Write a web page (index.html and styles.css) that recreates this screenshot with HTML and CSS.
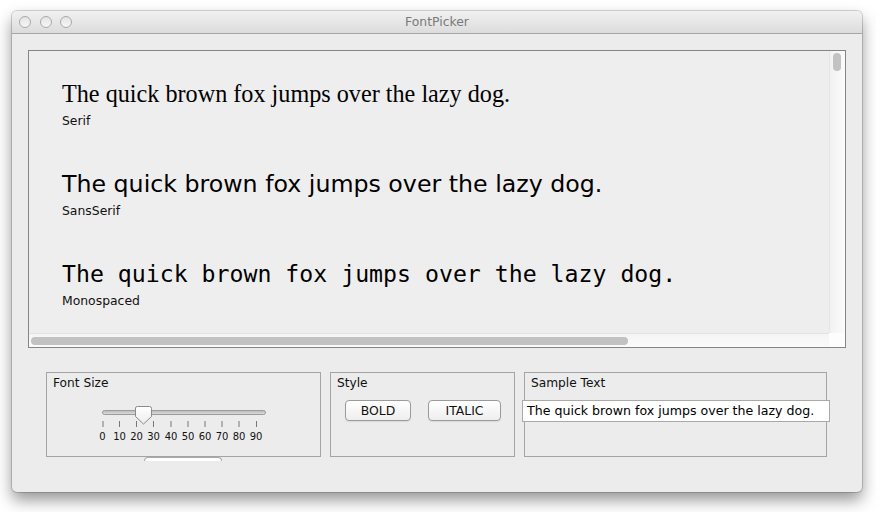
FILE: index.html
```html
<!DOCTYPE html>
<html>
<head>
<meta charset="utf-8">
<title>FontPicker</title>
<link rel="stylesheet" href="styles.css">
</head>
<body>
<div class="window">
  <div class="titlebar">
    <div class="lights">
      <span class="light"></span><span class="light"></span><span class="light"></span>
    </div>
    <div class="title">FontPicker</div>
    <div></div>
  </div>
  <div class="content">
    <div class="scrollpane">
      <div class="viewport">
        <div class="entry">
          <div class="sample serif">The quick brown fox jumps over the lazy dog.</div>
          <div class="fname">Serif</div>
        </div>
        <div class="entry">
          <div class="sample sans">The quick brown fox jumps over the lazy dog.</div>
          <div class="fname">SansSerif</div>
        </div>
        <div class="entry">
          <div class="sample mono">The quick brown fox jumps over the lazy dog.</div>
          <div class="fname">Monospaced</div>
        </div>
      </div>
      <div class="vbar"><div class="vthumb"></div></div>
      <div class="hbar"><div class="hthumb"></div></div>
      <div class="corner"></div>
    </div>
    <div class="panels">
      <div class="col">
        <div class="panel size-panel">
          <div class="ptitle">Font Size</div>
          <svg class="slider" width="170" height="38" viewBox="0 0 170 38">
            <defs>
              <linearGradient id="trk" x1="0" y1="0" x2="0" y2="1">
                <stop offset="0" stop-color="#b9b9b9"/>
                <stop offset="1" stop-color="#dedede"/>
              </linearGradient>
              <linearGradient id="thb" x1="0" y1="0" x2="0" y2="1">
                <stop offset="0" stop-color="#ffffff"/>
                <stop offset="1" stop-color="#ececec"/>
              </linearGradient>
            </defs>
            <rect x="3.5" y="6.5" width="163" height="4" rx="2" fill="url(#trk)" stroke="#9c9c9c"/>
            <g stroke="#777" stroke-width="1">
              <line x1="4" y1="17" x2="4" y2="23"/>
              <line x1="20.5" y1="17" x2="20.5" y2="23"/>
              <line x1="37.5" y1="17" x2="37.5" y2="23"/>
              <line x1="54.5" y1="17" x2="54.5" y2="23"/>
              <line x1="72" y1="17" x2="72" y2="23"/>
              <line x1="89" y1="17" x2="89" y2="23"/>
              <line x1="106" y1="17" x2="106" y2="23"/>
              <line x1="123" y1="17" x2="123" y2="23"/>
              <line x1="140" y1="17" x2="140" y2="23"/>
              <line x1="157.5" y1="17" x2="157.5" y2="23"/>
            </g>
            <path d="M36.5 4 Q36.5 2.5 38.5 2.5 L50.5 2.5 Q52.5 2.5 52.5 4.5 L52.5 12.5 L44.5 20 L36.5 12.5 Z" fill="url(#thb)" stroke="#8a8a8a"/>
            <g class="ticklbl" text-anchor="middle">
              <text x="3.5" y="35.5">0</text>
              <text x="20.5" y="35.5">10</text>
              <text x="37.5" y="35.5">20</text>
              <text x="54.5" y="35.5">30</text>
              <text x="72" y="35.5">40</text>
              <text x="89" y="35.5">50</text>
              <text x="106" y="35.5">60</text>
              <text x="123" y="35.5">70</text>
              <text x="140" y="35.5">80</text>
              <text x="157" y="35.5">90</text>
            </g>
          </svg>
        </div>
        <div class="stub"></div>
      </div>
      <div class="panel style-panel">
        <div class="ptitle">Style</div>
        <div class="buttons">
          <button class="btn bold-btn">BOLD</button>
          <button class="btn italic-btn">ITALIC</button>
        </div>
      </div>
      <div class="panel text-panel">
        <div class="ptitle">Sample Text</div>
        <div class="field">The quick brown fox jumps over the lazy dog.</div>
      </div>
    </div>
  </div>
</div>
</body>
</html>
```
FILE: styles.css
```css
html, body {
  margin: 0;
  padding: 0;
  background: #ffffff;
}
body {
  font-family: "DejaVu Sans", "Liberation Sans", sans-serif;
  color: #111;
  min-height: 512px;
}
.window {
  margin: 11px 0 0 12px;
  width: 850px;
  height: 481px;
  background: #ececec;
  border-radius: 5px;
  overflow: hidden;
  box-shadow: 0 0 0 1px rgba(0,0,0,0.16), 0 8px 16px rgba(0,0,0,0.42);
}
.titlebar {
  height: 22px;
  border-bottom: 1px solid #a6a6a6;
  background: linear-gradient(#f1f1f1, #dcdcdc);
  display: grid;
  grid-template-columns: 1fr auto 1fr;
  align-items: center;
}
.lights {
  display: flex;
  gap: 8.5px;
  padding-left: 7px;
}
.light {
  width: 10px;
  height: 10px;
  border-radius: 50%;
  border: 1px solid #a9a9a9;
  background: linear-gradient(#e4e4e4, #f6f6f6);
}
.title {
  font-size: 12.4px;
  color: #7a7a7a;
  line-height: 22px;
}
.content {
  padding: 16px 16px 0 16px;
}
.scrollpane {
  height: 298px;
  box-sizing: border-box;
  border: 1px solid #858585;
  display: grid;
  grid-template-columns: 1fr 16px;
  grid-template-rows: 1fr 14px;
}
.viewport {
  background: #eeeeee;
  overflow: hidden;
  padding-left: 33px;
  white-space: nowrap;
}
.entry {
  height: 90px;
  padding-top: 28px;
  box-sizing: border-box;
}
.sample {
  line-height: 30px;
  color: #000;
}
.serif {
  font-family: "Liberation Serif", serif;
  font-size: 24.2px;
}
.sans {
  font-family: "DejaVu Sans", sans-serif;
  font-size: 23.7px;
}
.mono {
  font-family: "DejaVu Sans Mono", monospace;
  font-size: 23.2px;
}
.fname {
  font-size: 12.4px;
  line-height: 16px;
  margin-top: 4px;
  color: #111;
}
.vbar {
  background: linear-gradient(to right, #f2f2f2, #fbfbfb);
  border-left: 1px solid #e6e6e6;
  padding: 2px 0 0 3px;
}
.vthumb {
  width: 8px;
  height: 18px;
  border-radius: 4px;
  background: #c2c2c2;
}
.hbar {
  background: linear-gradient(#f4f4f4, #fbfbfb);
  border-top: 1px solid #e3e3e3;
  padding: 3px 0 0 2px;
}
.hthumb {
  width: 597px;
  height: 8px;
  border-radius: 4px;
  background: #c2c2c2;
}
.corner {
  background: #fdfdfd;
}
.panels {
  display: flex;
  gap: 9px;
  margin-top: 24px;
  padding-left: 18px;
}
.col {
  display: flex;
  flex-direction: column;
}
.panel {
  height: 85px;
  box-sizing: border-box;
  border: 1px solid #a4a4a4;
}
.size-panel { width: 275px; }
.style-panel { width: 185px; }
.text-panel { width: 303px; }
.ptitle {
  font-size: 12.2px;
  line-height: 16px;
  padding: 2px 0 0 6px;
  color: #111;
}
.slider {
  display: block;
  margin: 13px 0 0 52px;
}
.ticklbl {
  font-family: "DejaVu Sans", sans-serif;
  font-size: 10px;
  fill: #111;
}
.stub {
  width: 76px;
  height: 3px;
  margin-left: 98px;
  border: 1px solid #a8a8a8;
  border-bottom: none;
  border-radius: 4px 4px 0 0;
  background: #ffffff;
}
.buttons {
  display: flex;
  gap: 17px;
  padding-left: 14px;
  margin-top: 9px;
}
.btn {
  height: 21px;
  box-sizing: border-box;
  border: 1px solid #9b9b9b;
  border-radius: 4px;
  background: linear-gradient(#ffffff, #eeeeee);
  box-shadow: 0 1px 1px rgba(0,0,0,0.08);
  font-family: "DejaVu Sans", sans-serif;
  font-size: 12.4px;
  color: #111;
  padding: 0;
  line-height: 19px;
}
.bold-btn { width: 66px; }
.italic-btn { width: 73px; }
.field {
  width: 308px;
  height: 22px;
  box-sizing: border-box;
  margin: 9px 0 0 -3px;
  border: 1px solid #a9a9a9;
  background: #ffffff;
  font-size: 12.6px;
  line-height: 20px;
  padding-left: 4px;
  color: #000;
  white-space: nowrap;
}
```
